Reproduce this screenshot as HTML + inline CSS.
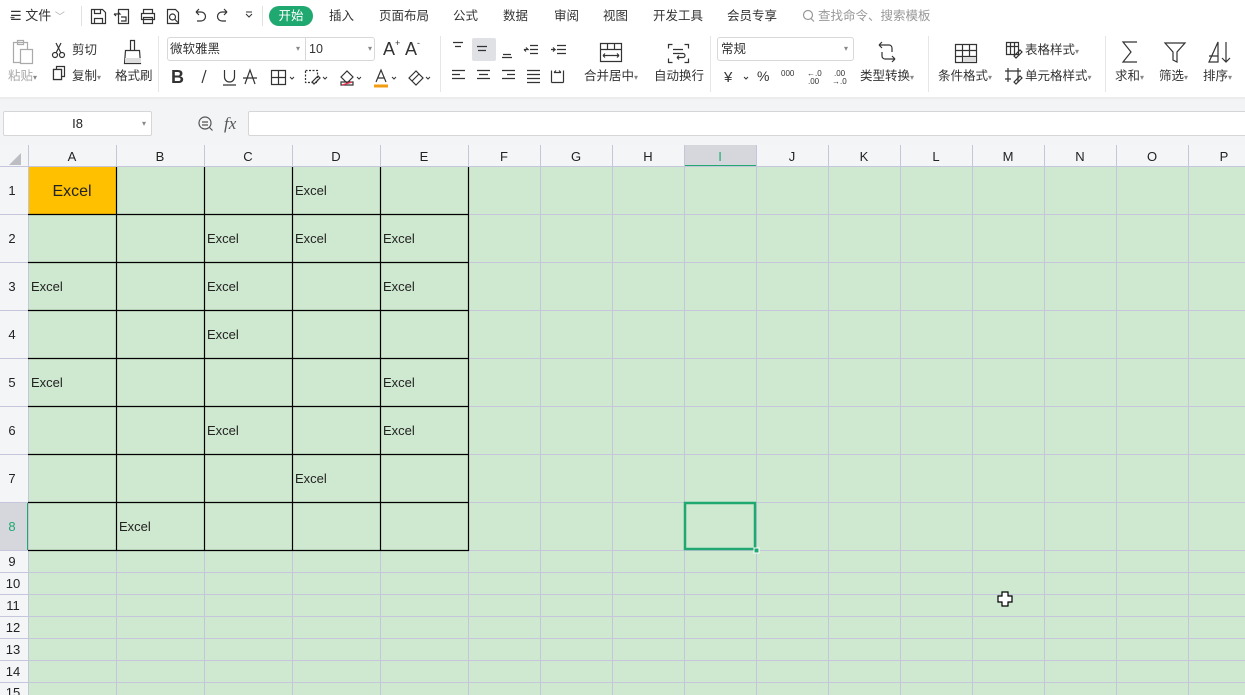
<!DOCTYPE html>
<html><head><meta charset="utf-8">
<style>
*{margin:0;padding:0;box-sizing:border-box}
body{width:1245px;height:695px;overflow:hidden;background:#fff;font-family:"Liberation Sans","Noto Sans CJK SC",sans-serif;color:#222;position:relative;font-size:12px}
.a{position:absolute;white-space:nowrap}
.t{font-size:12.5px;color:#333;line-height:16px}
.dd{font-size:8px;color:#888}
</style></head><body>
<!-- top menu -->
<div class="a t" style="left:10px;top:8px;font-size:13px">☰ 文件 <span style="color:#aaa;font-size:10px">﹀</span></div>
<div class="a" style="left:81px;top:6px;width:1px;height:20px;background:#e0e0e0"></div>
<div class="a" style="left:262px;top:6px;width:1px;height:20px;background:#e0e0e0"></div>
<div class="a" style="left:269px;top:6px;width:44px;height:20px;border-radius:10px;background:#1fa870;color:#fff;font-size:12.5px;text-align:center;line-height:20px">开始</div>
<div class="a t" style="left:329px;top:8px">插入</div>
<div class="a t" style="left:379px;top:8px">页面布局</div>
<div class="a t" style="left:453px;top:8px">公式</div>
<div class="a t" style="left:503px;top:8px">数据</div>
<div class="a t" style="left:554px;top:8px">审阅</div>
<div class="a t" style="left:603px;top:8px">视图</div>
<div class="a t" style="left:653px;top:8px">开发工具</div>
<div class="a t" style="left:727px;top:8px">会员专享</div>
<div class="a t" style="left:818px;top:8px;color:#999">查找命令、搜索模板</div>

<!-- ribbon labels -->
<div class="a t" style="left:8px;top:68px;color:#aaa">粘贴<span class="dd">▾</span></div>
<div class="a t" style="left:72px;top:42px">剪切</div>
<div class="a t" style="left:72px;top:68px">复制<span class="dd">▾</span></div>
<div class="a t" style="left:115px;top:68px">格式刷</div>
<div class="a" style="left:158px;top:36px;width:1px;height:56px;background:#e6e6e6"></div>
<div class="a" style="left:167px;top:37px;width:208px;height:24px;border:1px solid #d8d8d8;border-radius:3px"></div>
<div class="a" style="left:305px;top:37px;width:1px;height:24px;background:#d8d8d8"></div>
<div class="a t" style="left:170px;top:41px">微软雅黑</div><div class="a dd" style="left:296px;top:44px">▾</div>
<div class="a t" style="left:309px;top:41px">10</div><div class="a dd" style="left:368px;top:44px">▾</div>
<div class="a" style="left:440px;top:36px;width:1px;height:56px;background:#e6e6e6"></div>
<div class="a" style="left:472px;top:38px;width:24px;height:23px;background:#dfe1e5;border-radius:2px"></div>
<div class="a t" style="left:584px;top:68px">合并居中<span class="dd">▾</span></div>
<div class="a t" style="left:654px;top:68px">自动换行</div>
<div class="a" style="left:710px;top:36px;width:1px;height:56px;background:#e6e6e6"></div>
<div class="a" style="left:717px;top:37px;width:137px;height:24px;border:1px solid #d8d8d8;border-radius:3px"></div>
<div class="a t" style="left:721px;top:41px">常规</div><div class="a dd" style="left:844px;top:44px">▾</div>
<div class="a t" style="left:860px;top:68px">类型转换<span class="dd">▾</span></div>
<div class="a" style="left:928px;top:36px;width:1px;height:56px;background:#e6e6e6"></div>
<div class="a t" style="left:938px;top:68px">条件格式<span class="dd">▾</span></div>
<div class="a t" style="left:1025px;top:42px">表格样式<span class="dd">▾</span></div>
<div class="a t" style="left:1025px;top:68px">单元格样式<span class="dd">▾</span></div>
<div class="a" style="left:1105px;top:36px;width:1px;height:56px;background:#e6e6e6"></div>
<div class="a t" style="left:1115px;top:68px">求和<span class="dd">▾</span></div>
<div class="a t" style="left:1159px;top:68px">筛选<span class="dd">▾</span></div>
<div class="a t" style="left:1203px;top:68px">排序<span class="dd">▾</span></div>

<svg class="a" style="left:0;top:0" width="1245" height="97" fill="none" stroke="#333" stroke-width="1.2" font-family="Liberation Sans, sans-serif">
<!-- quick access -->
<path d="M91.5 9.5h11l3 3v11h-14z M94.5 9.5v4h6v-4 M94.5 23.5v-5h8v5"/>
<path d="M118.5 9.5h10v14h-10z M114 14h6l-2-2 M114 14l2 2 M121 17h5v4h-5"/>
<path d="M143.5 9.5h9v4h-9z M141.5 13.5h13v6h-13z M143.5 17.5h9v6h-9z"/>
<path d="M167.5 9.5h8l3 3v11h-11z"/><circle cx="172.5" cy="17" r="3"/><path d="M175 19.5l3 3"/>
<path d="M196 12h5a4.5 4.5 0 0 1 0 9h-4 M196 12l3-3 M196 12l3 3"/>
<path d="M227 12h-5a4.5 4.5 0 0 0 0 9h4 M227 12l-3-3 M227 12l-3 3"/>
<path d="M246 14l3 3 3-3 M246 12h6" stroke-width="1"/>
<circle cx="808" cy="15" r="4.5" stroke="#999"/><path d="M811 18.5l3 3" stroke="#999"/>
<path d="M10.5 17.5h4" stroke="#555"/><path d="M10.5 14.5h9M10.5 20.5h9" stroke="none"/>
<!-- paste -->
<path d="M13.5 42.5h14v20h-14z M17.5 40.5h6v4h-6z" stroke="#aaa"/><path d="M20.5 49.5h12v14h-12z" stroke="#aaa" fill="#fff"/>
<!-- cut -->
<circle cx="55" cy="55" r="2.5"/><circle cx="62" cy="55" r="2.5"/><path d="M56 53l5-10 M61 53l-5-10"/>
<!-- copy -->
<path d="M56.5 66.5h8v10h-8z M53.5 69.5h8v10h-8z" /><path d="M53.5 69.5h8v10h-8z" fill="#fff"/>
<!-- brush -->
<path d="M130.5 40.5h4v10h-4z M125.5 50.5h14l1 13h-16z"/><path d="M125 58h16v5h-16z" fill="#ddd" stroke="none"/>
<!-- A+ A- -->
<text x="383" y="55" font-size="18" fill="#333" stroke="none">A</text><text x="395" y="46" font-size="9" fill="#333" stroke="none">+</text>
<text x="405" y="55" font-size="18" fill="#333" stroke="none">A</text><text x="417" y="46" font-size="9" fill="#333" stroke="none">-</text>
<!-- font row -->
<text x="171" y="83" font-size="18" font-weight="bold" fill="#333" stroke="none">B</text>
<path d="M206 70l-4 13" />
<path d="M224.5 70v7a5 5 0 0 0 10 0v-7 M223 85h13"/>
<path d="M245 84l5-14 5 14 M243 78h14"/>
<path d="M271.5 70.5h14v14h-14z M278.5 70.5v14 M271.5 77.5h14"/><path d="M290 77l2 2 2-2" stroke-width="1"/>
<path d="M305.5 70.5h12v12h-12z" stroke-dasharray="2 1.5"/><path d="M312 82l6-6 2 2-6 6z"/><path d="M323 77l2 2 2-2" stroke-width="1"/>
<path d="M341 77l6-6 6 6-6 6z M341 82h12v3h-12z"/><path d="M342 85l10-3" stroke="#e35"/><path d="M357 77l2 2 2-2" stroke-width="1"/>
<path d="M376 82l5-12 5 12 M378 78h6"/><path d="M374 86h14" stroke="#f39c12" stroke-width="3"/><path d="M392 77l2 2 2-2" stroke-width="1"/>
<path d="M409 78l7-7 7 7-7 7z M412 81l7-7"/><path d="M426 77l2 2 2-2" stroke-width="1"/>
<!-- align -->
<path d="M453 42.5h10M455 46.5h6"/>
<path d="M477 46.5h10M478 50.5h8"/>
<path d="M503 54.5h8M502 57.5h10"/>
<path d="M530 45.5h8M530 49.5h8M530 53.5h8M524 49.5h4l-2-2M524 49.5l2 2"/>
<path d="M557 45.5h9M557 49.5h9M557 53.5h9M551 49.5h4l-2-2M555 49.5l-2 2"/>
<path d="M452 70.5h13M452 74.5h8M452 78.5h13"/>
<path d="M477 70.5h13M479 74.5h9M477 78.5h13"/>
<path d="M502 70.5h13M507 74.5h8M502 78.5h13"/>
<path d="M527 70.5h13M527 74.5h13M527 78.5h13M527 82.5h13"/>
<path d="M551.5 70.5v12M563.5 70.5v12M551.5 82.5h12M554 72.5h7M554 72.5l2-2M561 72.5l-2-2"/>
<!-- merge -->
<path d="M600.5 43.5h21v18h-21z M600.5 49.5h21 M607.5 43.5v6 M614.5 43.5v6 M603 55.5h16 M603 55.5l2-2 M603 55.5l2 2 M619 55.5l-2-2 M619 55.5l-2 2"/>
<!-- wrap -->
<path d="M672.5 44.5h-4v4 M684.5 44.5h4v4 M672.5 62.5h-4v-4 M684.5 62.5h4v-4 M673 49.5h10 M673 53.5h10a2 2 0 0 1 0 4h-6 M677 57.5l2-2 M677 57.5l2 2"/>
<!-- number -->
<text x="724" y="82" font-size="15" fill="#333" stroke="none">¥</text><path d="M744 77l2 2 2-2" stroke-width="1"/>
<text x="757" y="81" font-size="14" fill="#333" stroke="none">%</text>
<text x="781" y="76" font-size="8" fill="#333" stroke="none">000</text>
<text x="807" y="76" font-size="8" fill="#333" stroke="none">←.0</text><text x="808" y="84" font-size="8" fill="#333" stroke="none">.00</text>
<text x="834" y="76" font-size="8" fill="#333" stroke="none">.00</text><text x="832" y="84" font-size="8" fill="#333" stroke="none">→.0</text>
<!-- type convert -->
<path d="M879 45h10a3 3 0 0 1 3 3v4 M879 45l3-3 M879 45l3 3 M895 59h-10a3 3 0 0 1-3-3v-4 M895 59l-3-3 M895 59l-3 3"/>
<!-- cond format -->
<path d="M955.5 44.5h21v18h-21z M955.5 50.5h21 M955.5 56.5h21 M962.5 44.5v18 M969.5 44.5v18"/><path d="M963 57h13v5h-13z" fill="#ddd" stroke="none"/>
<!-- table style -->
<path d="M1006.5 42.5h12v12h-12z M1006.5 46.5h12 M1010.5 42.5v12 M1014.5 42.5v12"/><path d="M1014 56l6-6 2 2-6 6z"/>
<path d="M1008 68v14 M1018 68v14 M1005 71h16 M1005 79h6"/><path d="M1014 82l6-6 2 2-6 6z"/>
<!-- sum filter sort -->
<path d="M1137 42h-14l8 10-8 10h14"/>
<path d="M1165 43h20l-8 9v10l-4-2v-8z"/>
<path d="M1209 62l9-20v20z M1209 56h9 M1226 42v20 M1222 58l4 4 4-4"/>
</svg>

<!-- formula area -->
<div class="a" style="left:0;top:98px;width:1245px;height:47px;background:#f3f4f6;border-top:1px solid #e6e6e6"></div>
<div class="a" style="left:0;top:97px;width:1245px;height:3px;background:linear-gradient(#e9e9e9,#f3f4f6)"></div>
<div class="a" style="left:3px;top:111px;width:149px;height:25px;background:#fff;border:1px solid #d6d6d6;border-radius:2px;text-align:center;line-height:23px;font-size:13px">I8</div>
<div class="a dd" style="left:142px;top:119px">▾</div>
<svg class="a" style="left:196px;top:114px" width="50" height="20" fill="none" stroke="#555" stroke-width="1.2"><circle cx="9" cy="9" r="6"/><path d="M13.5 13.5l3 3 M6 8h6 M6 11h6"/><text x="28" y="15" font-size="17" font-style="italic" font-family="Liberation Serif, serif" fill="#555" stroke="none">fx</text></svg>
<div class="a" style="left:248px;top:111px;width:1000px;height:25px;background:#fff;border:1px solid #d6d6d6;border-radius:2px"></div>
<!-- sheet -->
<svg class="a" style="left:0;top:145px" width="1245" height="550" font-family="Liberation Sans, sans-serif" font-size="13">
<rect x="0" y="0" width="1245" height="22" fill="#f4f5f7"/>
<rect x="0" y="22" width="28" height="528" fill="#f4f5f7"/>
<rect x="28" y="22" width="1217" height="528" fill="#cfe8d0"/>
<rect x="684" y="0" width="72" height="21" fill="#d5d7dc"/>
<rect x="684" y="20" width="72" height="2" fill="#1fa870"/>
<rect x="0" y="357" width="28" height="48" fill="#d5d7dc"/>
<rect x="27" y="357" width="2" height="48" fill="#1fa870"/>
<polygon points="21,8 21,20 9,20" fill="#bcbec4"/>
<g stroke="#c5c5dc" stroke-width="1">
<path d="M116.5 0V550M204.5 0V550M292.5 0V550M380.5 0V550M468.5 0V550M540.5 0V550M612.5 0V550M684.5 0V550M756.5 0V550M828.5 0V550M900.5 0V550M972.5 0V550M1044.5 0V550M1116.5 0V550M1188.5 0V550M28.5 0V550"/>
<path d="M0 21.5H1245M0 69.5H1245M0 117.5H1245M0 165.5H1245M0 213.5H1245M0 261.5H1245M0 309.5H1245M0 357.5H1245M0 405.5H1245M0 427.5H1245M0 449.5H1245M0 471.5H1245M0 493.5H1245M0 515.5H1245M0 537.5H1245"/>
</g>
<rect x="29" y="22" width="87" height="47" fill="#ffc000"/>
<g stroke="#000" stroke-width="1.2" fill="none">
<path d="M116.5 22V406M204.5 22V406M292.5 22V406M380.5 22V406M468.5 22V406"/>
<path d="M28 69.5H469M28 117.5H469M28 165.5H469M28 213.5H469M28 261.5H469M28 309.5H469M28 357.5H469M28 405.5H469"/>
</g>
<rect x="685" y="358" width="70" height="46" fill="none" stroke="#1fa870" stroke-width="2.5"/>
<rect x="754" y="403" width="5" height="5" fill="#1fa870" stroke="#fff" stroke-width="1"/>
<g fill="#222" text-anchor="middle" font-size="13">
<text x="72" y="16">A</text><text x="160" y="16">B</text><text x="248" y="16">C</text><text x="336" y="16">D</text><text x="424" y="16">E</text>
<text x="504" y="16">F</text><text x="576" y="16">G</text><text x="648" y="16">H</text><text x="720" y="16" fill="#1fa870">I</text><text x="792" y="16">J</text>
<text x="864" y="16">K</text><text x="936" y="16">L</text><text x="1008" y="16">M</text><text x="1080" y="16">N</text><text x="1152" y="16">O</text><text x="1224" y="16">P</text>
<text x="12" y="50">1</text><text x="12" y="98">2</text><text x="12" y="146">3</text><text x="12" y="194">4</text><text x="12" y="242">5</text><text x="12" y="290">6</text><text x="12" y="338">7</text><text x="12" y="386" fill="#1fa870">8</text>
<text x="12" y="421">9</text><text x="13" y="443">10</text><text x="13" y="465">11</text><text x="13" y="487">12</text><text x="13" y="509">13</text><text x="13" y="531">14</text><text x="13" y="552">15</text>
<text x="72" y="51" font-size="16">Excel</text>
</g>
<g fill="#222" font-size="13">
<text x="295" y="50">Excel</text>
<text x="207" y="98">Excel</text><text x="295" y="98">Excel</text><text x="383" y="98">Excel</text>
<text x="31" y="146">Excel</text><text x="207" y="146">Excel</text><text x="383" y="146">Excel</text>
<text x="207" y="194">Excel</text>
<text x="31" y="242">Excel</text><text x="383" y="242">Excel</text>
<text x="207" y="290">Excel</text><text x="383" y="290">Excel</text>
<text x="295" y="338">Excel</text>
<text x="119" y="386">Excel</text>
</g>
<path d="M1002 447h6v4h4v6h-4v4h-6v-4h-4v-6h4z" fill="#fff" stroke="#000" stroke-width="1.2"/>
</svg>
</body></html>
